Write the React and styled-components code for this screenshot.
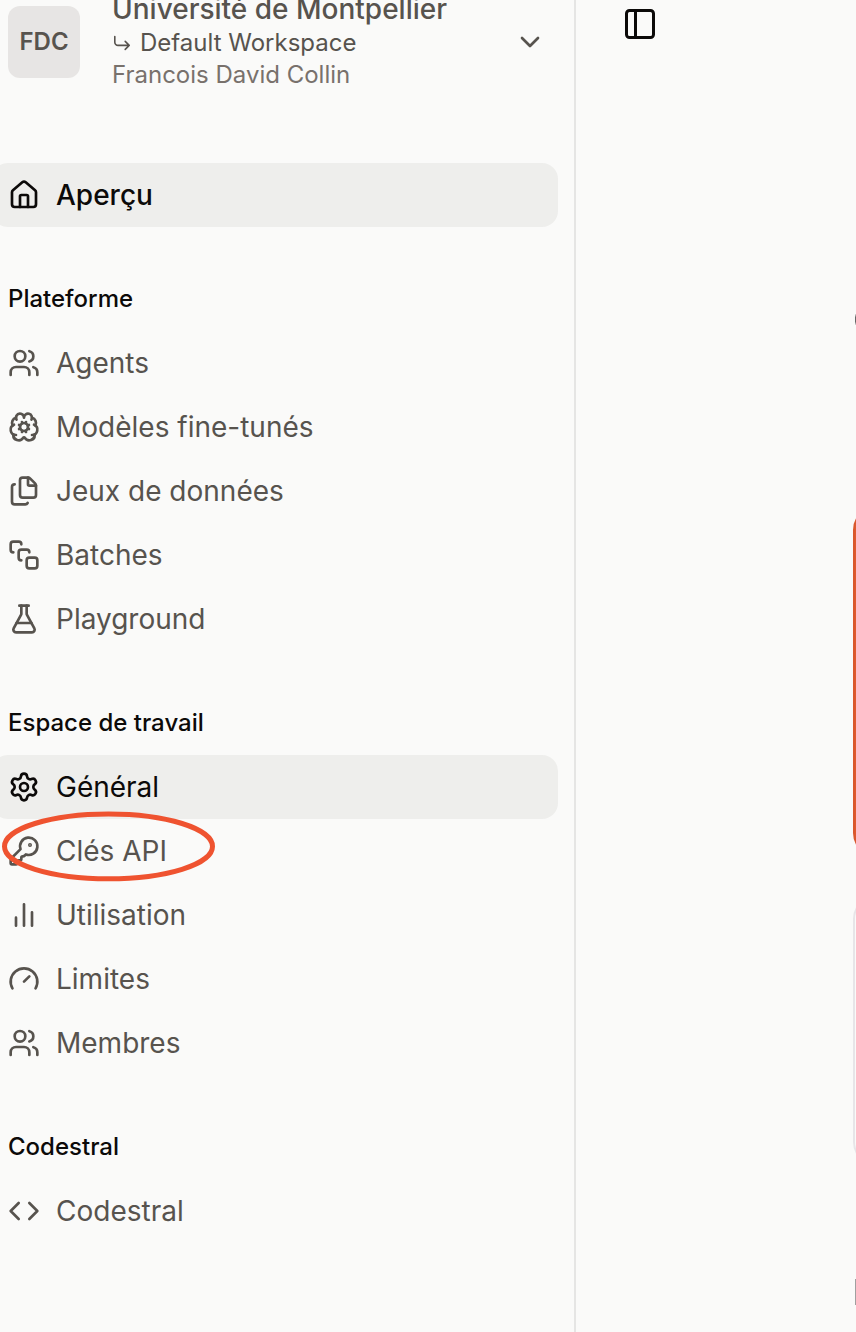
import React from "react";
import styled, { createGlobalStyle } from "styled-components";
import {
  House, Users, BrainCog, Files, SquareStack, FlaskConical, Settings,
  KeyRound, Gauge, Code, ChevronDown, PanelLeft,
} from "lucide-react";

const GlobalStyle = createGlobalStyle`
  * { box-sizing: border-box; }
  body {
    margin: 0;
    background: #fafaf9;
    font-family: Inter, "Liberation Sans", sans-serif;
    overflow: hidden;
  }
`;

const Page = styled.div`
  display: flex;
  width: 856px;
  height: 1332px;
  overflow: hidden;
  background: #fafaf9;
`;

const Sidebar = styled.aside`
  position: relative;
  display: flex;
  flex-direction: column;
  flex: none;
  width: 576px;
  border-right: 2px solid #e5e5e4;
`;

const Account = styled.header`
  display: flex;
  height: 163px;
  padding: 0 28px 0 8px;
`;

const Avatar = styled.div`
  display: flex;
  align-items: center;
  justify-content: center;
  flex: none;
  width: 72px;
  height: 72px;
  margin-top: 6px;
  padding-bottom: 2px;
  border-radius: 12px;
  background: #e7e5e4;
  color: #57534e;
  font-size: 24px;
  font-weight: 600;
`;

const AccountText = styled.div`
  flex: 1;
  margin: -9px 0 0 32px;
  color: #57534e;
  white-space: nowrap;
`;

const Organisation = styled.div`
  font-size: 28px;
  font-weight: 500;
  line-height: 36px;
`;

const Workspace = styled.div`
  display: flex;
  align-items: center;
  gap: 8px;
  font-size: 24px;
  line-height: 32px;
`;

const Owner = styled(Workspace)`
  color: #78716c;
`;

const AccountToggle = styled.div`
  display: flex;
  height: 84px;
  align-items: center;
  color: #57534e;
`;

const Nav = styled.nav`
  display: flex;
  flex-direction: column;
  gap: 40px;
  margin-left: -8px;
  padding-right: 16px;
`;

const SectionTitle = styled.div`
  height: 64px;
  padding-left: 16px;
  color: #0c0a09;
  font-size: 24px;
  font-weight: 500;
  line-height: 64px;
`;

const Item = styled.div`
  display: flex;
  align-items: center;
  gap: 16px;
  height: 64px;
  padding-left: 16px;
  border-radius: 16px;
  font-size: 28px;
  font-weight: ${(p) => (p.$strong ? 500 : 400)};
  color: ${(p) => (p.$active ? "#0c0a09" : "#57534e")};
  background: ${(p) => (p.$active ? "#eeeeec" : "transparent")};
`;

const Highlight = styled.svg`
  position: absolute;
  left: 0;
  top: 808px;
`;

const Main = styled.main`
  display: flex;
  flex-direction: column;
  flex: 1;
  min-width: 0;
  overflow: hidden;
`;

const TopBar = styled.div`
  display: flex;
  height: 310px;
  padding: 6px 0 0 46px;
  color: #0c0a09;
`;

const Sliver = styled.div`
  flex: none;
  width: 1px;
  height: ${(p) => p.$height}px;
  margin: ${(p) => p.$top}px 0 0 279px;
  background: ${(p) => p.$fill};
`;

const Card = styled.div`
  flex: none;
  width: 400px;
  height: ${(p) => p.$height}px;
  margin: ${(p) => p.$top}px 0 0 277px;
  border: 2px solid ${(p) => p.$border};
  border-radius: 24px;
  background: ${(p) => p.$fill};
`;

const BranchArrow = () => (
  <svg width="20" height="20" viewBox="0 0 20 20" fill="none" stroke="currentColor" strokeWidth="1.6" strokeLinecap="round" strokeLinejoin="round">
    <path d="M2.8 3.6v5.6a3.2 3.2 0 0 0 3.2 3.2h11.2M13.2 8.4l4 4-4 4" />
  </svg>
);

const BarsIcon = ({ size }) => (
  <svg width={size} height={size} viewBox="0 0 24 24" fill="none" stroke="currentColor" strokeWidth="2" strokeLinecap="round">
    <path d="M18 20V10M12 20V4M6 20v-6" />
  </svg>
);

const sections = [
  { items: [{ icon: House, label: "Aperçu", active: true, strong: true }] },
  {
    title: "Plateforme",
    items: [
      { icon: Users, label: "Agents" },
      { icon: BrainCog, label: "Modèles fine-tunés" },
      { icon: Files, label: "Jeux de données" },
      { icon: SquareStack, label: "Batches" },
      { icon: FlaskConical, label: "Playground" },
    ],
  },
  {
    title: "Espace de travail",
    items: [
      { icon: Settings, label: "Général", active: true },
      { icon: KeyRound, label: "Clés API" },
      { icon: BarsIcon, label: "Utilisation" },
      { icon: Gauge, label: "Limites" },
      { icon: Users, label: "Membres" },
    ],
  },
  { title: "Codestral", items: [{ icon: Code, label: "Codestral" }] },
];

export default function App() {
  return (
    <Page>
      <GlobalStyle />
      <Sidebar>
        <Account>
          <Avatar>FDC</Avatar>
          <AccountText>
            <Organisation>Université de Montpellier</Organisation>
            <Workspace><BranchArrow />Default Workspace</Workspace>
            <Owner>Francois David Collin</Owner>
          </AccountText>
          <AccountToggle><ChevronDown size={32} /></AccountToggle>
        </Account>
        <Nav>
          {sections.map((section, i) => (
            <section key={i}>
              {section.title && <SectionTitle>{section.title}</SectionTitle>}
              {section.items.map(({ icon: Icon, label, active, strong }) => (
                <Item key={label} $active={active} $strong={strong}>
                  <Icon size={32} />
                  <span>{label}</span>
                </Item>
              ))}
            </section>
          ))}
        </Nav>
        <Highlight width="220" height="78" fill="none">
          <ellipse cx="108.5" cy="38.4" rx="104" ry="32.4" stroke="#ef5330" strokeWidth="5" />
        </Highlight>
      </Sidebar>
      <Main>
        <TopBar><PanelLeft size={36} /></TopBar>
        <Sliver $top={4} $height={11} $fill="linear-gradient(#ddd, #666 30%, #666 70%, #ddd)" />
        <Card $top={181} $height={351} $fill="#e15a2d" $border="#d9572d" />
        <Card $top={38} $height={271} $fill="#fafaf9" $border="#e7e5e8" />
        <Sliver $top={113} $height={26} $fill="#a0a0a0" />
      </Main>
    </Page>
  );
}
